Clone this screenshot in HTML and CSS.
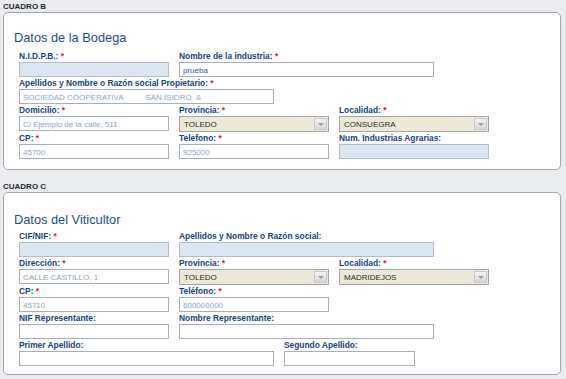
FILE: index.html
```html
<!DOCTYPE html>
<html lang="es">
  <head>
    <meta charset="UTF-8" />
    <meta name="viewport" content="width=device-width, initial-scale=1.0" />
    <title>Datos de la Bodega</title>
    <link rel="stylesheet" href="styles.css">
  </head>
  <body>
    <div class="cuadro">
      <div class="cuadro-title">CUADRO B</div>
      <div class="panel">
        <h2>Datos de la Bodega</h2>

        <div class="row">
          <div class="field w-sm">
            <label>N.I.D.P.B.: <span class="req">*</span></label>
            <input type="text" class="locked" disabled />
          </div>
          <div class="field w-lg">
            <label>Nombre de la industria: <span class="req">*</span></label>
            <input type="text" value="prueba" />
          </div>
        </div>

        <div class="row">
          <div class="field w-lg">
            <label>Apellidos y Nombre o Razón social Propietario: <span class="req">*</span></label>
            <input type="text" class="blur" value="SOCIEDAD COOPERATIVA          SAN ISIDRO  &amp;" />
          </div>
        </div>

        <div class="row">
          <div class="field w-sm">
            <label>Domicilio: <span class="req">*</span></label>
            <input type="text" class="blur" value="C/ Ejemplo de la calle, 511" />
          </div>
          <div class="field w-sm">
            <label>Provincia: <span class="req">*</span></label>
            <div class="select"><span class="value">TOLEDO</span><span class="arrow"></span></div>
          </div>
          <div class="field w-sm">
            <label>Localidad: <span class="req">*</span></label>
            <div class="select"><span class="value blur">CONSUEGRA</span><span class="arrow"></span></div>
          </div>
        </div>

        <div class="row">
          <div class="field w-sm">
            <label>CP: <span class="req">*</span></label>
            <input type="text" class="blur" value="45700" />
          </div>
          <div class="field w-sm">
            <label>Telefono: <span class="req">*</span></label>
            <input type="text" class="blur" value="925000" />
          </div>
          <div class="field w-sm">
            <label>Num. Industrias Agrarias:</label>
            <input type="text" class="locked" disabled />
          </div>
        </div>
      </div>
    </div>

    <div class="cuadro">
      <div class="cuadro-title">CUADRO C</div>
      <div class="panel panel-c">
        <h2>Datos del Viticultor</h2>

        <div class="row">
          <div class="field w-sm">
            <label>CIF/NIF: <span class="req">*</span></label>
            <input type="text" class="locked" disabled />
          </div>
          <div class="field w-lg">
            <label>Apellidos y Nombre o Razón social:</label>
            <input type="text" class="locked" disabled />
          </div>
        </div>

        <div class="row">
          <div class="field w-sm">
            <label>Dirección: <span class="req">*</span></label>
            <input type="text" class="blur" value="CALLE CASTILLO, 1" />
          </div>
          <div class="field w-sm">
            <label>Provincia: <span class="req">*</span></label>
            <div class="select"><span class="value">TOLEDO</span><span class="arrow"></span></div>
          </div>
          <div class="field w-sm">
            <label>Localidad: <span class="req">*</span></label>
            <div class="select"><span class="value blur">MADRIDEJOS</span><span class="arrow"></span></div>
          </div>
        </div>

        <div class="row">
          <div class="field w-sm">
            <label>CP: <span class="req">*</span></label>
            <input type="text" class="blur" value="45710" />
          </div>
          <div class="field w-sm">
            <label>Teléfono: <span class="req">*</span></label>
            <input type="text" class="blur" value="600000000" />
          </div>
        </div>

        <div class="row">
          <div class="field w-sm">
            <label>NIF Representante:</label>
            <input type="text" />
          </div>
          <div class="field w-lg">
            <label>Nombre Representante:</label>
            <input type="text" />
          </div>
        </div>

        <div class="row">
          <div class="field w-lg">
            <label>Primer Apellido:</label>
            <input type="text" />
          </div>
          <div class="field w-md">
            <label>Segundo Apellido:</label>
            <input type="text" />
          </div>
        </div>
      </div>
    </div>
  </body>
</html>
```

FILE: styles.css
```css
* {
  margin: 0;
  padding: 0;
  box-sizing: border-box;
}

body {
  font-family: "Liberation Sans", Arial, sans-serif;
  background: #e9ebee;
  padding: 1px 5px 0 3px;
}

.cuadro + .cuadro {
  margin-top: 11px;
}

.cuadro-title {
  font-size: 8px;
  font-weight: 700;
  line-height: 11px;
  height: 11px;
  color: #262a30;
}

.panel {
  width: 558px;
  background: #ffffff;
  border: 1px solid #a4a6a9;
  border-radius: 5px;
  padding: 17px 10px 10px 10px;
}

.panel-c {
  padding-top: 19px;
  padding-bottom: 8px;
}

.panel h2 {
  font-size: 12.8px;
  font-weight: 400;
  line-height: 15px;
  color: #1d4c8a;
  margin-bottom: 6px;
}

.panel-c h2 {
  margin-bottom: 4px;
}

.row {
  display: flex;
  gap: 10px;
  padding-left: 5px;
}

.row + .row {
  margin-top: 1px;
}

.field {
  display: flex;
  flex-direction: column;
}

.w-sm {
  width: 150px;
}

.w-md {
  width: 131px;
}

.w-lg {
  width: 255px;
}

.field label {
  display: block;
  font-size: 8.4px;
  font-weight: 700;
  line-height: 11px;
  height: 11px;
  color: #173f80;
  white-space: nowrap;
}

.req {
  color: #d02020;
}

.field input {
  width: 100%;
  height: 15px;
  border: 1px solid #a7aeb6;
  background: #ffffff;
  font-family: "Liberation Sans", Arial, sans-serif;
  font-size: 8px;
  color: #3358a8;
  padding: 1px 3px 0;
}

.field input.locked {
  background: #dde7f4;
  border-color: #b3bcc6;
}

.field input.blur,
.value.blur {
  color: #8fa2c6;
}

.select {
  display: flex;
  height: 16px;
  background: #ece9d8;
  border: 1px solid #9fa4aa;
  padding: 1px;
}

.select .value {
  flex: 1;
  font-size: 8px;
  line-height: 14px;
  color: #2a2a2a;
  padding-left: 3px;
}

.select .arrow {
  width: 13px;
  background: linear-gradient(#f4f4f4, #d6d7d9);
  border: 1px solid #c8cacd;
  display: flex;
  align-items: center;
  justify-content: center;
}

.select .arrow::after {
  content: "";
  border-left: 3px solid transparent;
  border-right: 3px solid transparent;
  border-top: 3px solid #9a9ea4;
}
```
